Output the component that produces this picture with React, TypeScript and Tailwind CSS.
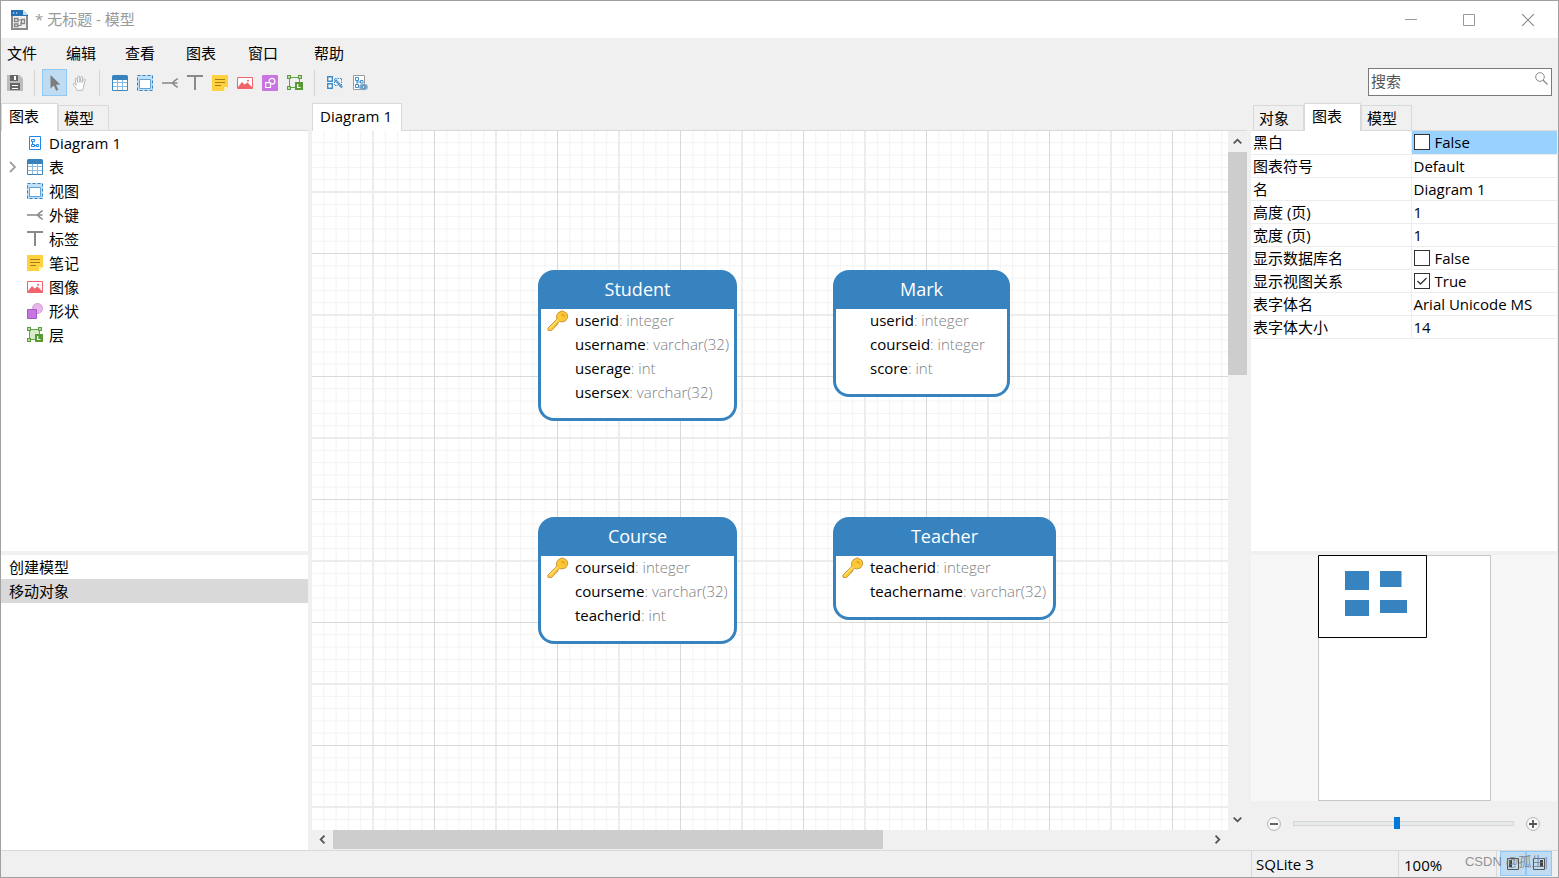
import React from "react";

type IconProps = { className?: string };

function Svg({ children, className = "size-4", box = "0 0 16 16" }: { children: React.ReactNode; className?: string; box?: string }) {
  return (
    <svg viewBox={box} className={`shrink-0 ${className}`} fill="none" aria-hidden="true">
      {children}
    </svg>
  );
}

function AppIcon() {
  return (
    <Svg className="h-5 w-[17px]" box="0 0 17 20">
      <path d="M1 5V19H16V5" fill="#f1f1f1" stroke="#8a8a8a" strokeWidth="2" />
      <path d="M0 0H12L17 5V6H0Z" fill="#2472b4" />
      <path d="M12 0L17 5H12Z" fill="#c9dcec" />
      <path d="M2 3H3.300M5 3H6.300" stroke="#fff" strokeWidth="1.200" />
      <path d="M3.500 8.500H7V11.500H3.500ZM3.500 14H7V16.500H3.500ZM10.500 9.500H13.500V13.500H10.500Z" stroke="#858585" strokeWidth="1.300" />
      <path d="M7 10H10.500M7 15.500H10V12" stroke="#858585" strokeWidth="1.200" />
    </Svg>
  );
}

function SaveIcon() {
  return (
    <Svg>
      <path d="M0 0H12.500L16 3.500V16H0Z" fill="#bcbcbc" />
      <path d="M3 0H11V6H3Z" fill="#666" />
      <path d="M7 1H9V5H7Z" fill="#fff" />
      <path d="M3 8H13V15H3Z" fill="#666" />
      <path d="M5 10.500H11M5 13.500H11" stroke="#fff" />
    </Svg>
  );
}

function PointerIcon() {
  return (
    <Svg>
      <path d="M3.500 0V13.500L6.800 10.600L9.200 15.800L11.300 14.800L9 9.700L13.300 9.500Z" fill="#7c7c7c" />
    </Svg>
  );
}

function HandIcon() {
  return (
    <Svg>
      <path
        d="M5 15.300C4.200 13 1.700 10.500 1.300 9.300C1 8.100 2.500 7.900 3.200 8.900L4.300 10.200L3.100 4.300C2.900 3 4.600 2.700 4.900 3.900L5.800 7.500L5.700 2C5.700.7 7.500.7 7.600 2L8 7.300L8.900 2.200C9.200 1 10.800 1.300 10.600 2.600L10 7.700L11.700 4.500C12.300 3.400 13.700 4 13.300 5.200L11.900 10C11.700 12 11.200 13.600 10.600 15.300Z"
        fill="#fff"
        stroke="#b7b7b7"
      />
    </Svg>
  );
}

function TableIcon() {
  return (
    <Svg>
      <path d="M.5 4V15.500H15.500V4" fill="#fff" stroke="#3f86bd" />
      <path d="M5.500 4V15M10.500 4V15M1 7.500H15M1 11.500H15" stroke="#8dbbe0" />
      <path d="M0 5V1.500Q0 0 1.500 0H14.500Q16 0 16 1.500V5Z" fill="#3783bf" />
    </Svg>
  );
}

function ViewIcon() {
  return (
    <Svg>
      <path d="M0 0H16V16H0Z" fill="#bfe0f8" />
      <path d="M.5 .5H15.500V15.500H.5Z" stroke="#3783bf" strokeDasharray="3 2" />
      <path d="M2.500 4.500H13.500V13.500H2.500Z" fill="#fff" stroke="#63a3d5" />
    </Svg>
  );
}

function ForeignKeyIcon() {
  return (
    <Svg>
      <path d="M0 8H15.500M15.800 3.500L12.500 5.800L10.500 8L12.500 10.200L15.800 12.500" stroke="#878787" strokeWidth="1.500" />
    </Svg>
  );
}

function LabelIcon() {
  return (
    <Svg>
      <path d="M0 1H16M8 1V15" stroke="#8a8a8a" strokeWidth="2" />
    </Svg>
  );
}

function NoteIcon() {
  return (
    <Svg>
      <path d="M0 0H16V12L12 16H0Z" fill="#fed23f" />
      <path d="M16 12H12V16Z" fill="#fff0b4" />
      <path d="M3 4.500H13M3 7.500H13M3 10.500H9" stroke="#a87a18" />
    </Svg>
  );
}

function ImageIcon() {
  return (
    <Svg>
      <path d="M.5 2.500H15.500V13.500H.5Z" fill="#fff" stroke="#f1646c" />
      <path d="M1 12L5 7L7.500 9.500L9 8.500L10.500 7.500L15 12V13.500H1Z" fill="#f1646c" />
      <circle cx="11" cy="5.800" r="1" fill="#f1646c" />
    </Svg>
  );
}

function ShapeToolIcon() {
  return (
    <Svg>
      <rect width="16" height="16" rx="1" fill="#ca74e2" />
      <circle cx="10" cy="6.200" r="2.900" stroke="#fff" strokeWidth="1.200" />
      <path d="M3.600 7.600H8.500V12.500H3.600Z" fill="#ca74e2" stroke="#fff" strokeWidth="1.200" />
    </Svg>
  );
}

function ShapeIcon() {
  return (
    <Svg>
      <circle cx="10.500" cy="5.500" r="5" fill="#e7b6e9" stroke="#d39bd8" />
      <path d="M.5 6.500H9.500V15.500H.5Z" fill="#c576e3" stroke="#a458c4" />
    </Svg>
  );
}

function LayerIcon({ fill = "none" }: { fill?: string }) {
  return (
    <Svg>
      <path d="M2.500 2.500H12.500V12.500H2.500Z" fill={fill} stroke="#62a345" />
      <path d="M.6 .6H3.400V3.400H.6ZM11.600 .6H14.400V3.400H11.600ZM.6 11.600H3.400V14.400H.6Z" fill="#fff" stroke="#5b9d3d" strokeWidth="1.200" />
      <path d="M8 7H16V15H8Z" fill="#579a35" />
      <path d="M10.700 9V12.500H13.500" stroke="#fff" strokeWidth="1.200" />
    </Svg>
  );
}

function AutoLayoutIcon() {
  return (
    <Svg>
      <path d="M.7 1.700H5.300V6.300H.7ZM.7 8.700H5.300V13.300H.7Z" fill="#fff" stroke="#3d8ccb" strokeWidth="1.400" />
      <path d="M8 3.500H14.500M14.500 4V10M8 10.500H11M7.500 4V10" stroke="#3d8ccb" strokeDasharray="1.500 1" />
      <path d="M8.500 5L15 12.500" stroke="#3d8ccb" strokeWidth="2.400" strokeDasharray="1.800 .4" />
    </Svg>
  );
}

function DiagramOptionsIcon() {
  return (
    <Svg>
      <path d="M1.500 .5H12.500V14.500H1.500Z" fill="#fff" stroke="#9a9a9a" />
      <path d="M3.500 2.500H6.500V5.500H3.500ZM3.500 9.500H6.500V12.500H3.500ZM8.500 5.500H11V8H8.500ZM5 5.500V9.500M5 7H8.500" stroke="#3d8ccb" />
      <ellipse cx="11.500" cy="12" rx="4.300" ry="3.300" fill="#82a9c9" />
      <circle cx="11.500" cy="12" r="1.500" fill="#d9e9f5" stroke="#467da9" />
    </Svg>
  );
}

function DiagramIcon() {
  return (
    <Svg>
      <path d="M2.500 1.500H13.500V14.500H2.500Z" fill="#fff" stroke="#2186ee" />
      <path d="M4.500 4.500H7.500V6.500H4.500ZM4.500 9.500H7.500V11.500H4.500ZM9.500 9.500H11.500V11.500H9.500ZM5.500 6.500V9.500M7.500 10.500H9.500" stroke="#2186ee" />
    </Svg>
  );
}

function KeyIcon() {
  return (
    <Svg className="size-[22px]" box="0 0 22 22">
      <path
        d="M11.500 2.500L15.500 .8L20 3.500L20.800 7L18.500 11L14.500 12L12.500 11.300L10.800 13L11 14.200L9.700 14.300L9.500 15.800L8 16L7.800 17.400L4.500 20.600L1 20.300L1 18L9.800 9.300L9.600 5.500Z"
        fill="#fcc835"
        stroke="#c9973f"
        strokeWidth="1"
      />
      <path d="M2.300 18.500L11 10" stroke="#ffe36b" strokeWidth="1.200" />
      <path d="M13.500 4.500L18 7.800L17.500 4.800L15.500 3.800Z" fill="#e5a727" />
    </Svg>
  );
}

function SearchIcon() {
  return (
    <Svg className="size-[13px]" box="0 0 13 13">
      <circle cx="5" cy="5" r="4.300" stroke="#8a8a8a" />
      <path d="M8 8L12.500 12.500" stroke="#8a8a8a" strokeWidth="1.300" />
    </Svg>
  );
}

function Chevron({ className = "" }: IconProps) {
  return (
    <Svg className={`size-[9px] ${className}`} box="0 0 10 10">
      <path d="M.8 7.200L5 3L9.200 7.200" stroke="#555" strokeWidth="2" />
    </Svg>
  );
}

function PaneIcon({ right = false }: { right?: boolean }) {
  return (
    <Svg className="size-3" box="0 0 12 12">
      <path d="M.5 .5H11.500V11.500H.5Z" stroke="#555" />
      {right ? <path d="M7 2H10V9H7Z" fill="#444" /> : <path d="M2 2H5V9H2Z" fill="#444" />}
    </Svg>
  );
}

function Tab({ label, active = false, wide = false }: { label: string; active?: boolean; wide?: boolean }) {
  return (
    <button
      role="tab"
      aria-selected={active}
      className={
        active
          ? `flex h-7 items-start border border-b-0 border-[#d9d9d9] bg-white pt-px leading-[22px] ${wide ? "w-[90px] pl-[7px]" : "w-[57px] pl-[7px]"}`
          : "flex h-[26px] w-[51px] items-start border border-[#d9d9d9] bg-[#f0f0f0] pl-[5px] leading-[24px]"
      }
    >
      {label}
    </button>
  );
}

function ToolButton({ label, active = false, children }: { label: string; active?: boolean; children: React.ReactNode }) {
  return (
    <button
      aria-label={label}
      title={label}
      className={`flex h-[27px] w-[25px] items-center justify-center border pt-px ${active ? "border-[#90c8f6] bg-[#c0dcf3]" : "border-transparent"}`}
    >
      {children}
    </button>
  );
}

function Separator() {
  return <div className="mx-[7px] h-[26px] w-px bg-[#d4d4d4]" />;
}

const treeItems = [
  { label: "Diagram 1", icon: <DiagramIcon /> },
  { label: "表", icon: <TableIcon />, expandable: true },
  { label: "视图", icon: <ViewIcon /> },
  { label: "外键", icon: <ForeignKeyIcon /> },
  { label: "标签", icon: <LabelIcon /> },
  { label: "笔记", icon: <NoteIcon /> },
  { label: "图像", icon: <ImageIcon /> },
  { label: "形状", icon: <ShapeIcon /> },
  { label: "层", icon: <LayerIcon fill="#d5edc7" /> },
];

type Entity = { name: string; place: string; fields: { name: string; type: string; key?: boolean }[] };

const entities: Entity[] = [
  {
    name: "Student",
    place: "left-[226px] top-[139px] w-[199px]",
    fields: [
      { name: "userid", type: "integer", key: true },
      { name: "username", type: "varchar(32)" },
      { name: "userage", type: "int" },
      { name: "usersex", type: "varchar(32)" },
    ],
  },
  {
    name: "Mark",
    place: "left-[521px] top-[139px] w-[177px]",
    fields: [
      { name: "userid", type: "integer" },
      { name: "courseid", type: "integer" },
      { name: "score", type: "int" },
    ],
  },
  {
    name: "Course",
    place: "left-[226px] top-[386px] w-[199px]",
    fields: [
      { name: "courseid", type: "integer", key: true },
      { name: "courseme", type: "varchar(32)" },
      { name: "teacherid", type: "int" },
    ],
  },
  {
    name: "Teacher",
    place: "left-[521px] top-[386px] w-[223px]",
    fields: [
      { name: "teacherid", type: "integer", key: true },
      { name: "teachername", type: "varchar(32)" },
    ],
  },
];

function EntityNode({ entity }: { entity: Entity }) {
  return (
    <section className={`absolute rounded-[16px] bg-[#3783bf] px-[3px] pb-[3px] ${entity.place}`}>
      <h2 className="h-[39px] text-center text-[18px] leading-[39px] text-white">{entity.name}</h2>
      <ul className="rounded-b-[13px] bg-white pb-[13px]">
        {entity.fields.map((field) => (
          <li key={field.name} className="flex h-6 items-center whitespace-nowrap pl-[6px] text-[15px] leading-[22px]">
            <span className="flex w-7 shrink-0">{field.key && <KeyIcon />}</span>
            <span className="pb-[2px] text-black">
              {field.name}
              <span className="font-light text-[#808080]">: {field.type}</span>
            </span>
          </li>
        ))}
      </ul>
    </section>
  );
}

const cell = 123;
const minorSteps = [1, 2, 3, 4, 6, 7, 8, 9].map((n) => (n * cell) / 10);

function CanvasGrid() {
  return (
    <svg className="absolute inset-0 size-full" aria-hidden="true">
      <defs>
        <pattern id="grid" width={cell} height={cell} patternUnits="userSpaceOnUse" y="-1" x="-1">
          {minorSteps.map((p) => (
            <path key={p} d={`M${p + 0.5} 0V${cell}M0 ${p + 0.5}H${cell}`} stroke="#f3f3f3" />
          ))}
          <path d={`M62 0V${cell}M0 62H${cell}`} stroke="#ececec" strokeWidth="2" />
          <path d={`M.5 0V${cell}M0 .5H${cell}`} stroke="#d9d9d9" />
        </pattern>
      </defs>
      <rect width="100%" height="100%" fill="url(#grid)" />
    </svg>
  );
}

const properties: { label: string; value: string; checked?: boolean }[] = [
  { label: "黑白", value: "False", checked: false },
  { label: "图表符号", value: "Default" },
  { label: "名", value: "Diagram 1" },
  { label: "高度 (页)", value: "1" },
  { label: "宽度 (页)", value: "1" },
  { label: "显示数据库名", value: "False", checked: false },
  { label: "显示视图关系", value: "True", checked: true },
  { label: "表字体名", value: "Arial Unicode MS" },
  { label: "表字体大小", value: "14" },
];

function PropertyValue({ value, checked, label }: { value: string; checked?: boolean; label: string }) {
  if (checked === undefined) return <>{value}</>;
  return (
    <label className="relative flex items-center gap-[5px]">
      <input type="checkbox" aria-label={label} defaultChecked={checked} className="peer size-4 appearance-none border border-[#333] bg-white" />
      <svg viewBox="0 0 16 16" className="pointer-events-none absolute left-0 hidden size-4 peer-checked:block" fill="none" aria-hidden="true">
        <path d="M3.500 8L6.500 11L12.500 5" stroke="#333" strokeWidth="1.300" />
      </svg>
      {value}
    </label>
  );
}

export default function App() {
  return (
    <div className="flex h-screen flex-col overflow-hidden border border-[#a0a0a0] bg-[#f0f0f0] font-['Open_Sans','Noto_Sans_CJK_SC',sans-serif] text-[15px] text-black">
      <header className="flex h-[37px] shrink-0 items-center bg-white pl-[10px]">
        <AppIcon />
        <h1 className="ml-[7px] flex-1 text-[15px] text-[#999]">* 无标题 - 模型</h1>
        <button aria-label="最小化" className="flex h-full w-[58px] items-center justify-center">
          <Svg className="size-3" box="0 0 12 12"><path d="M0 5.500H12" stroke="#999" /></Svg>
        </button>
        <button aria-label="最大化" className="flex h-full w-[58px] items-center justify-center">
          <Svg className="size-3" box="0 0 12 12"><path d="M.5 .5H11.500V11.500H.5Z" stroke="#999" /></Svg>
        </button>
        <button aria-label="关闭" className="flex h-full w-[60px] items-center justify-center">
          <Svg className="size-3" box="0 0 12 12"><path d="M0 0L12 12M12 0L0 12" stroke="#888" strokeWidth="1.100" /></Svg>
        </button>
      </header>

      <nav className="grid h-[30px] shrink-0 grid-cols-[59px_59px_61px_62px_66px_auto] items-center justify-start pl-[6px]">
        {["文件", "编辑", "查看", "图表", "窗口", "帮助"].map((item) => (
          <button key={item} className="text-left">{item}</button>
        ))}
      </nav>

      <div className="flex h-[35px] shrink-0 items-start pl-px pr-[6px]">
        <div className="flex items-center pt-px">
          <ToolButton label="保存"><SaveIcon /></ToolButton>
          <Separator />
          <ToolButton label="选择" active><PointerIcon /></ToolButton>
          <ToolButton label="移动"><HandIcon /></ToolButton>
          <Separator />
          <ToolButton label="表"><TableIcon /></ToolButton>
          <ToolButton label="视图"><ViewIcon /></ToolButton>
          <ToolButton label="外键"><ForeignKeyIcon /></ToolButton>
          <ToolButton label="标签"><LabelIcon /></ToolButton>
          <ToolButton label="笔记"><NoteIcon /></ToolButton>
          <ToolButton label="图像"><ImageIcon /></ToolButton>
          <ToolButton label="形状"><ShapeToolIcon /></ToolButton>
          <ToolButton label="层"><LayerIcon /></ToolButton>
          <Separator />
          <ToolButton label="自动布局"><AutoLayoutIcon /></ToolButton>
          <ToolButton label="图表选项"><DiagramOptionsIcon /></ToolButton>
        </div>
        <label className="ml-auto flex h-7 w-[184px] items-start border border-[#7a7a7a] bg-white pl-[2px] pr-[3px]">
          <input type="text" aria-label="搜索" placeholder="搜索" className="h-6 min-w-0 flex-1 bg-transparent outline-none placeholder:text-[#555]" />
          <span className="pt-[3px]"><SearchIcon /></span>
        </label>
      </div>

      <main className="grid min-h-0 flex-1 grid-cols-[307px_minmax(0,1fr)_307px] gap-x-1">
        <aside className="flex min-h-0 flex-col">
          <div role="tablist" className="flex h-7 shrink-0 items-end bg-[linear-gradient(#d9d9d9,#d9d9d9)] bg-[length:100%_1px] bg-bottom bg-no-repeat">
            <Tab label="图表" active />
            <Tab label="模型" />
          </div>
          <ul className="min-h-0 flex-[420] bg-white">
            {treeItems.map((item) => (
              <li key={item.label} className="flex h-6 items-center pl-[6px]">
                <span className="flex w-5 shrink-0">
                  {item.expandable && (
                    <button aria-label="展开">
                      <Svg className="size-3" box="0 0 12 12"><path d="M3 1L8 6L3 11" stroke="#a0a0a0" strokeWidth="1.800" /></Svg>
                    </button>
                  )}
                </span>
                {item.icon}
                <span className="ml-[6px] leading-6">{item.label}</span>
              </li>
            ))}
          </ul>
          <ul className="mt-1 min-h-0 flex-[295] bg-white">
            <li className="h-6 pl-2 leading-6">创建模型</li>
            <li className="h-6 bg-[#d9d9d9] pl-2 leading-6">移动对象</li>
          </ul>
        </aside>

        <section className="flex min-h-0 flex-col">
          <div role="tablist" className="flex h-7 shrink-0 items-end bg-[linear-gradient(#d9d9d9,#d9d9d9)] bg-[length:100%_1px] bg-bottom bg-no-repeat">
            <Tab label="Diagram 1" active wide />
          </div>
          <div className="grid min-h-0 flex-1 grid-cols-[minmax(0,1fr)_19px] grid-rows-[minmax(0,1fr)_20px]">
            <div className="relative overflow-hidden bg-white">
              <CanvasGrid />
              {entities.map((entity) => (
                <EntityNode key={entity.name} entity={entity} />
              ))}
            </div>
            <div className="flex flex-col items-center">
              <button aria-label="向上滚动" className="flex h-[21px] w-full shrink-0 items-center justify-center"><Chevron /></button>
              <div className="flex w-full flex-1 flex-col">
                <div className="h-[34%] w-full bg-[#cdcdcd]" />
              </div>
              <button aria-label="向下滚动" className="flex h-[22px] w-full shrink-0 items-center justify-center"><Chevron className="rotate-180" /></button>
            </div>
            <div className="flex h-[19px]">
              <button aria-label="向左滚动" className="flex h-full w-[21px] shrink-0 items-center justify-center"><Chevron className="-rotate-90" /></button>
              <div className="flex h-full flex-1">
                <div className="h-full w-[63%] bg-[#cdcdcd]" />
              </div>
              <button aria-label="向右滚动" className="flex h-full w-[22px] shrink-0 items-center justify-center"><Chevron className="rotate-90" /></button>
            </div>
          </div>
        </section>

        <aside className="flex min-h-0 flex-col pr-px">
          <div role="tablist" className="flex h-7 shrink-0 items-end bg-[linear-gradient(#d9d9d9,#d9d9d9)] bg-[length:100%_1px] bg-bottom bg-no-repeat pl-[2px]">
            <Tab label="对象" />
            <Tab label="图表" active />
            <Tab label="模型" />
          </div>
          <div className="min-h-0 flex-[420] bg-white">
            <table className="w-full table-fixed border-collapse">
              <tbody>
                {properties.map((property, index) => (
                  <tr key={property.label} className="h-[23px] border-b border-[#ededed]">
                    <th scope="row" className="w-[160px] border-r border-[#ededed] p-0 pl-[2px] text-left font-normal leading-[22px]">{property.label}</th>
                    <td className={`whitespace-nowrap p-0 pl-[2px] leading-[22px] ${index === 0 ? "bg-[#99d1ff]" : ""}`}>
                      <PropertyValue value={property.value} checked={property.checked} label={property.label} />
                    </td>
                  </tr>
                ))}
              </tbody>
            </table>
          </div>
          <div className="mt-1 flex min-h-0 flex-[246] justify-center bg-[#f7f7f7]">
            <div className="relative h-full w-[173px] border border-[#c8c8c8] bg-white">
              <svg viewBox="0 0 109 83" className="absolute -left-px -top-px h-[83px] w-[109px]" role="img" aria-label="缩略图">
                <path d="M.5 .5H108.500V82.500H.5Z" fill="#fff" stroke="#000" />
                <path d="M27 16H51V35H27ZM62 16H83.500V32H62ZM27 45H51V61H27ZM62 45H89V58H62Z" fill="#3783bf" />
              </svg>
            </div>
          </div>
          <div className="flex h-[49px] shrink-0 items-center justify-center gap-3 pb-1 pr-[2px]">
            <button aria-label="缩小">
              <Svg className="size-[14px]" box="0 0 14 14">
                <circle cx="7" cy="7" r="6.400" fill="#fafafa" stroke="#b0b0b0" />
                <path d="M3 7H11" stroke="#555" strokeWidth="1.800" />
              </Svg>
            </button>
            <input
              type="range"
              aria-label="缩放"
              min="0"
              max="100"
              defaultValue="47"
              className="h-3 w-[221px] appearance-none bg-transparent [&::-webkit-slider-runnable-track]:h-[5px] [&::-webkit-slider-runnable-track]:border [&::-webkit-slider-runnable-track]:border-[#d6d6d6] [&::-webkit-slider-runnable-track]:bg-[#e7eaea] [&::-webkit-slider-thumb]:-mt-[5px] [&::-webkit-slider-thumb]:h-3 [&::-webkit-slider-thumb]:w-[6px] [&::-webkit-slider-thumb]:appearance-none [&::-webkit-slider-thumb]:bg-[#0078d7]"
            />
            <button aria-label="放大">
              <Svg className="size-[14px]" box="0 0 14 14">
                <circle cx="7" cy="7" r="6.400" fill="#fafafa" stroke="#b0b0b0" />
                <path d="M3 7H11M7 3V11" stroke="#555" strokeWidth="1.800" />
              </Svg>
            </button>
          </div>
        </aside>
      </main>

      <footer className="relative flex h-[27px] shrink-0 justify-end border-t border-[#d9d9d9] pr-[6px]">
        <div className="w-[147px] border-l border-[#d9d9d9] pl-1 leading-[27px]">SQLite 3</div>
        <div className="w-[98px] border-l border-[#d9d9d9] pl-[5px] leading-[28px]">100%</div>
        <div className="w-[4px] border-l border-[#d9d9d9]" />
        <button aria-label="左窗格" className="flex h-[25px] w-[26px] items-center justify-center border border-[#90c8f6] bg-[#c0dcf3]"><PaneIcon /></button>
        <button aria-label="右窗格" className="flex h-[25px] w-[26px] items-center justify-center border border-[#90c8f6] bg-[#c0dcf3]"><PaneIcon right /></button>
        <span className="pointer-events-none absolute right-[10px] top-[3px] font-['Liberation_Sans','Noto_Sans_CJK_SC',sans-serif] text-[13px] leading-[16px] text-[#777]/80">CSDN @孤生|</span>
      </footer>
    </div>
  );
}
